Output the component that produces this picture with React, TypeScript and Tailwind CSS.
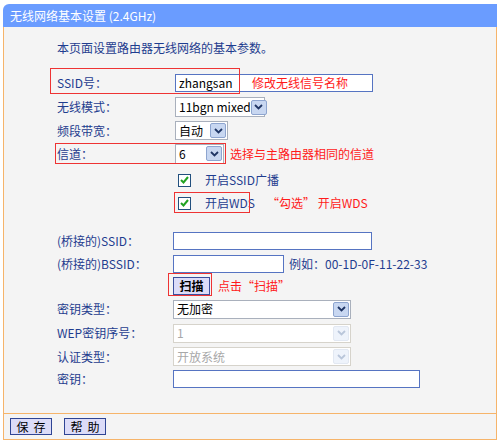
import React from 'react'

const font = { fontFamily: '"Noto Sans CJK SC", "Noto Sans", sans-serif' }

function Chevron({ disabled }: { disabled?: boolean }) {
  return (
    <svg width="9" height="6" viewBox="0 0 9 6">
      <polyline
        points="1,1 4.5,4.5 8,1"
        fill="none"
        stroke={disabled ? '#b9c6da' : '#1f3564'}
        strokeWidth="1.8"
      />
    </svg>
  )
}

function Select({ value, width, height = 20, disabled }: { value: string; width: number; height?: number; disabled?: boolean }) {
  return (
    <div
      className={`flex items-center justify-between bg-white border ${disabled ? 'border-[#d6d3cb] text-[#a8a8a8]' : 'border-[#a9b0bc] text-black'}`}
      style={{ width, height }}
    >
      <span className="pl-[3px] leading-none whitespace-nowrap">{value}</span>
      <div
        className={`mr-[1px] shrink-0 flex items-center justify-center w-[16px] h-[15px] rounded-[2px] border ${
          disabled ? 'bg-[#eef3fb] border-[#e2e8f2]' : 'bg-[#c8d7f1] border-[#8ea5cf]'
        }`}
      >
        <Chevron disabled={disabled} />
      </div>
    </div>
  )
}

function TextInput({ value, width, height = 18 }: { value?: string; width: number; height?: number }) {
  return (
    <div
      className="flex items-center bg-white border border-[#5674c2] text-black pl-[3px] leading-none"
      style={{ width, height }}
    >
      {value}
    </div>
  )
}

function Checkbox() {
  return (
    <div className="w-[13px] h-[13px] border border-[#22507e] bg-white flex items-center justify-center">
      <svg width="9" height="8" viewBox="0 0 9 8">
        <polyline points="1,4 3.5,6.5 8,1" fill="none" stroke="#22a322" strokeWidth="2" />
      </svg>
    </div>
  )
}

function Row({ label, h, lw = 118, children }: { label?: string; h: number; lw?: number; children?: React.ReactNode }) {
  return (
    <div className="flex items-center" style={{ height: h }}>
      <div className="text-[#1f3d8f] leading-none shrink-0 whitespace-nowrap" style={{ width: lw }}>
        {label}
      </div>
      {children}
    </div>
  )
}

export default function App() {
  return (
    <div className="relative w-[500px] h-[442px] bg-white text-[12px] pt-[4px] px-[3px]" style={font}>
      <div className="h-[23px] bg-[#6a9cff] rounded-tl-[6px] flex items-center pl-[7px] text-white leading-none">
        无线网络基本设置 (2.4GHz)
      </div>

      <div className="h-[386px] bg-[#f4f4f4] border-l border-r border-[#f6b46a] pl-[53px] pt-[11px]">
        <div className="h-[20px] flex items-center text-[#1f3d8f] leading-none">
          本页面设置路由器无线网络的基本参数。
        </div>
        <div className="h-[13px]" />

        <Row label="SSID号：" h={24}>
          <TextInput value="zhangsan" width={198} />
        </Row>
        <Row label="无线模式：" h={24}>
          <Select value="11bgn mixed" width={90} />
        </Row>
        <Row label="频段带宽：" h={23}>
          <Select value="自动" width={53} height={19} />
        </Row>
        <Row label="信道：" h={23}>
          <Select value="6" width={49} />
          <span className="ml-[6px] text-[#ff1a1a] leading-none">选择与主路由器相同的信道</span>
        </Row>
        <div className="h-[3px]" />
        <Row h={24}>
          <div className="ml-[3px] flex items-center">
            <Checkbox />
            <span className="ml-[14px] text-[#1f3d8f] leading-none">开启SSID广播</span>
          </div>
        </Row>
        <Row h={22}>
          <div className="ml-[3px] flex items-center">
            <Checkbox />
            <span className="ml-[14px] text-[#1f3d8f] leading-none">开启WDS</span>
            <span className="ml-[12px] text-[#ff1a1a] leading-none">“勾选” 开启WDS</span>
          </div>
        </Row>
        <div className="h-[15px]" />

        <Row label="(桥接的)SSID：" h={23} lw={116}>
          <TextInput width={199} />
        </Row>
        <Row label="(桥接的)BSSID：" h={23} lw={116}>
          <TextInput width={111} />
          <span className="ml-[5px] text-[#1f3d8f] leading-none">例如：00-1D-0F-11-22-33</span>
        </Row>
        <Row h={22} lw={116}>
          <button className="w-[37px] h-[18px] bg-[#dcdcf8] border border-[#3b4f9e] text-black leading-none font-semibold flex items-center justify-center">
            扫描
          </button>
          <span className="ml-[8px] text-[#ff1a1a] leading-none">点击“扫描”</span>
        </Row>
        <Row label="密钥类型：" h={24} lw={116}>
          <Select value="无加密" width={178} height={19} />
        </Row>
        <Row label="WEP密钥序号：" h={24} lw={116}>
          <Select value="1" width={178} height={19} disabled />
        </Row>
        <Row label="认证类型：" h={23} lw={116}>
          <Select value="开放系统" width={178} height={19} disabled />
        </Row>
        <Row label="密钥：" h={22} lw={116}>
          <TextInput width={247} />
        </Row>
      </div>

      <div className="h-[27px] bg-[#f4f4f4] border border-[#f6b46a] flex items-center pl-[6px] gap-[12px]">
        <button className="w-[42px] h-[17px] bg-[#dcdcf8] border border-[#2f4594] text-black leading-none flex items-center justify-center gap-[5px]">
          <span>保</span>
          <span>存</span>
        </button>
        <button className="w-[42px] h-[17px] bg-[#dcdcf8] border border-[#2f4594] text-black leading-none flex items-center justify-center gap-[5px]">
          <span>帮</span>
          <span>助</span>
        </button>
      </div>

      {/* red annotation boxes */}
      <div className="absolute left-[50px] top-[68px] w-[190px] h-[26px] border border-[#ee3333] pointer-events-none" />
      <div className="absolute left-[252px] top-[76px] text-[#ff1a1a] leading-[14px]">修改无线信号名称</div>
      <div className="absolute left-[55px] top-[143px] w-[171px] h-[21px] border border-[#ee3333] pointer-events-none" />
      <div className="absolute left-[174px] top-[192px] w-[76px] h-[21px] border border-[#ee3333] pointer-events-none" />
      <div className="absolute left-[168px] top-[273px] w-[44px] h-[23px] border border-[#ee3333] pointer-events-none" />
    </div>
  )
}
